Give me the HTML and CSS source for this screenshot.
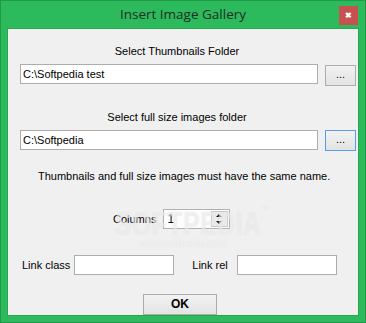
FILE: index.html
```html
<!DOCTYPE html>
<html>
<head>
	<title>Insert Image Gallery</title>
	<link rel="stylesheet" href="styles.css">
</head>
<body>

	<div class="window">
		<div class="titlebar">
			<div class="title">Insert Image Gallery</div>
			<div class="close">&#x2716;</div>
		</div>

		<div class="client">
			<div class="wm">SOFTPEDIA<span class="wm_tm">&trade;</span></div>
			<div class="wm_url">www.softpedia.com</div>

			<div class="lbl lbl_first">Select Thumbnails Folder</div>
			<div class="pathrow">
				<div class="field field_path">C:\Softpedia test</div>
				<div class="btn btn_dots">...</div>
			</div>

			<div class="lbl lbl_second">Select full size images folder</div>
			<div class="pathrow">
				<div class="field field_path">C:\Softpedia</div>
				<div class="btn btn_dots btn_focus">...</div>
			</div>

			<div class="note">Thumbnails and full size images must have the same name.</div>

			<div class="colrow">
				<span class="colname">Columns</span>
				<div class="spin">
					<span class="spin_val">1</span>
					<div class="spin_btns">
						<div class="spin_up"></div>
						<div class="spin_dn"></div>
					</div>
				</div>
			</div>

			<div class="linkrow">
				<span class="linkname">Link class</span>
				<div class="field field_link"></div>
				<span class="linkname linkname_rel">Link rel</span>
				<div class="field field_link"></div>
			</div>

			<div class="okrow">
				<div class="btn btn_ok">OK</div>
			</div>
		</div>
	</div>

</body>
</html>
```

FILE: styles.css
```css
body {margin: 0; background: #2dba5c; font-family: "Liberation Sans", Arial, sans-serif; font-size: 11px; color: #000;}
.window {width: 366px; height: 323px; box-sizing: border-box; border: 1px solid #1f9a47; background: #2dba5c;
		display: flex; flex-direction: column;}
.titlebar {height: 29px; position: relative; display: flex; align-items: center; justify-content: center;}
.title {font-family: "Open Sans", "Noto Sans", sans-serif; font-size: 13.5px; color: #1d2f24; margin-top: -1px;}
.close {position: absolute; right: 7px; top: 5px; width: 19px; height: 19px; background: #c75050; color: #fff;
		font-size: 8px; font-weight: bold; display: flex; align-items: center; justify-content: center;}
.client {position: relative; flex: 1; margin: 0 6px 6px 6px; border: 1px solid #26a851; background: #f0f0f0;}
.client > div {position: relative;}

.lbl {text-align: center; line-height: 13px; padding-right: 12px;}
.lbl_first {margin-top: 16px;}
.lbl_second {margin-top: 25px;}
.pathrow {display: flex; align-items: flex-start; margin-top: 6px; padding-left: 12px;}
.field {box-sizing: border-box; background: #fff; border: 1px solid #adadad; height: 20px; line-height: 18px;
		padding-left: 2px;}
.field_path {width: 298px;}
.btn {box-sizing: border-box; border: 1px solid #adadad; background: linear-gradient(#f2f2f2, #e3e3e3);
		text-align: center;}
.btn_dots {width: 31px; height: 21px; line-height: 17px; margin-left: 7px; margin-top: 1px;}
.btn_focus {border-color: #569de5; margin-top: 0;}

.note {margin-top: 19px; line-height: 13px; padding-left: 30px;}

.colrow {display: flex; align-items: center; margin-top: 26px; padding-left: 105px; height: 20px;}
.colname {margin-right: 7px;}
.spin {box-sizing: border-box; width: 67px; height: 20px; border: 1px solid #adadad; background: #fff;
		display: flex; opacity: 0.93;}
.spin_val {flex: 1; line-height: 18px; padding-left: 3px; font-size: 12px;}
.spin_btns {width: 15px; margin: 1px 1px 1px 0; display: flex; flex-direction: column; border: 1px solid #c8c8c8;
		background: #eaeaea;}
.spin_up, .spin_dn {flex: 1; position: relative;}
.spin_up:after, .spin_dn:after {content: ""; position: absolute; left: 4px; top: 2px; border: 3px solid transparent;}
.spin_up:after {border-bottom: 3px solid #000; top: -1px;}
.spin_dn:after {border-top: 3px solid #000; top: 2px;}

.linkrow {display: flex; align-items: center; margin-top: 26px; padding-left: 14px; height: 20px;}
.linkname {margin-right: 4px;}
.linkname_rel {margin-left: 18px; margin-right: 9px;}
.field_link {width: 100px;}

.okrow {margin-top: 19px; padding-left: 135px;}
.btn_ok {width: 74px; height: 21px; line-height: 19px; font-weight: bold; font-size: 12px;}

.client > .wm {position: absolute; z-index: 2; left: 107px; top: 175px; font-family: "Liberation Sans", Arial, sans-serif;
		font-size: 34px; font-weight: bold; letter-spacing: 1px; color: rgba(255,255,255,0.5);
		transform: scaleX(0.72); transform-origin: left top; text-shadow: 0 0 1px rgba(160,160,160,0.3);
		pointer-events: none;}
.wm_tm {font-size: 9px; vertical-align: top; font-weight: normal;}
.client > .wm_url {position: absolute; z-index: 2; left: 132px; top: 209px; font-size: 10px;
		color: rgba(255,255,255,0.75); text-shadow: 0 0 1px rgba(160,160,160,0.4); pointer-events: none;}
```
